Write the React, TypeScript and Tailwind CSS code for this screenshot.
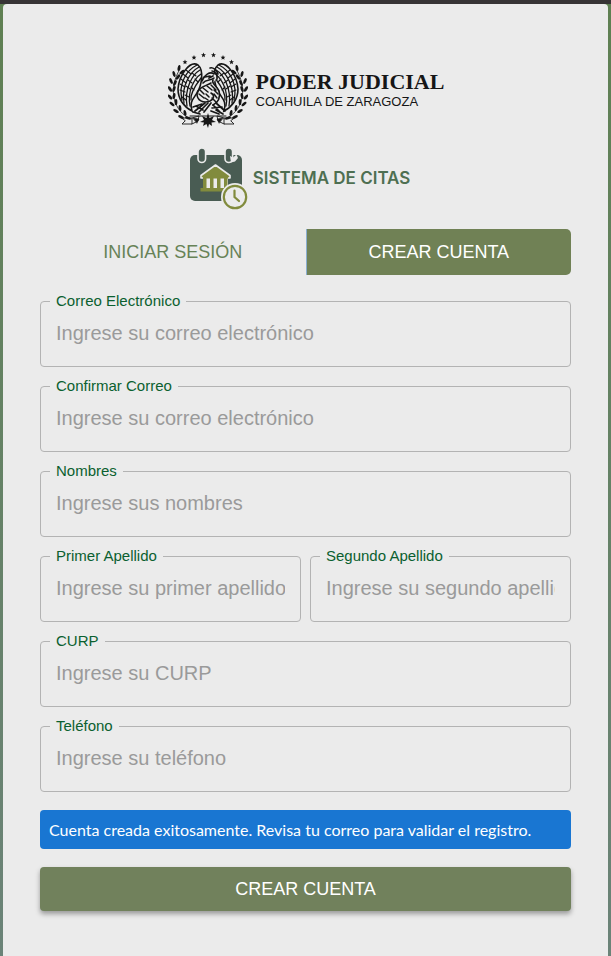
import React, { useState } from "react";

const INK = "#161616";

/* One laurel branch, drawn on the left side; mirrored for the right. */
const LEAVES: [number, number, number][] = [
  [20, 66, -70], [17, 61, -10], [13, 65, -65], [12, 56, -5], [8, 59, -60], [8, 50, 0],
  [4, 52, -50], [6, 44, 10], [2, 45, -40], [6, 37, 20], [2, 37, -30], [7, 31, 25],
  [3, 29, -25], [10, 25, 35], [6, 22, -15], [14, 20, 50], [11, 16, 10],
];

function Half() {
  return (
    <g fill="none" stroke={INK} strokeLinecap="round">
      <path d="M23 67C6 60 -1 38 12 17" strokeWidth="0.8" />
      {LEAVES.map(([x, y, r]) => (
        <ellipse key={`${x}-${y}`} cx={x} cy={y} rx="1.4" ry="3.1" fill={INK} stroke="none" transform={`rotate(${r} ${x} ${y})`} />
      ))}
      <path d="M30 13C22 8 11 23 10 37C10 47 16 55 24 59C21 51 25 47 29 41C34 33 36 18 30 13Z" strokeWidth="1.6" />
      <path d="M29 13C19 18 10 31 14 48M31 15C22 20 13 34 16 51M32 18C25 22 16 36 19 54M33 22C27 26 19 38 22 54M33 26C30 30 22 40 23 48" strokeWidth="1.3" />
      <path d="M18 18L23 22M15 22L20 26M13 27L18 31M12 32L17 35M12 38L17 40M20 28L24 31M18 34L22 37M24 21L28 24M17 43L21 45M14 45L18 48M27 27L30 30M23 35L26 38" strokeWidth="1.1" />
    </g>
  );
}

function Star({ x, y }: { x: number; y: number }) {
  return <path transform={`translate(${x} ${y})`} fill={INK} d="M0-2.4L.7-.8 2.4-.7 1.1.5 1.5 2.2 0 1.2-1.5 2.2-1.1.5-2.4-.7-.7-.8Z" />;
}

function Emblem() {
  return (
    <svg viewBox="0 0 80 76" className="h-[76px] w-20 shrink-0" aria-hidden="true">
      <Star x={17} y={10} /><Star x={26} y={5.5} /><Star x={35.5} y={3} />
      <Star x={45.5} y={3} /><Star x={55} y={5.5} /><Star x={63.5} y={10} />
      <Half />
      <g transform="translate(80 0) scale(-1 1)"><Half /></g>
      <path d="M37 24C41 19 48 20 49 26C46 29 44 31 49 36C54 42 51 51 44 54L53 59 57 63H50L42 58 34 62H25L31 56 27 54 33 51C26 46 28 38 36 36C42 34 43 31 37 29L34 32Z" fill="#ebebeb" />
      <g fill="none" stroke={INK} strokeLinecap="round" strokeLinejoin="round">
        <path d="M42 16C45 15 49 18 50 22M44 19C47 19 50 23 49 27M34 29C36 23 42 19 46 22M35 31C38 27 43 29 46 26" strokeWidth="1.6" />
        <path d="M37 25L42 24M41 26L45 24M45 28C43 31 48 33 51 39C53 45 50 51 45 53" strokeWidth="1.7" />
        <path d="M43 31C38 34 30 35 29 42C29 48 35 52 42 49C46 47 47 43 43 41" strokeWidth="1.6" />
        <path d="M32 38L36 42M31 42L36 46M35 36L40 40M39 34L44 38M43 33L48 38M46 38L50 42M46 42L49 46M44 46L48 50M38 42L41 45M37 46L40 48" strokeWidth="1.5" />
        <path d="M37 51L27 59M40 51L31 60M43 51L36 60M34 52L25 55M28 54L35 58M45 53L52 60M48 51L57 59M44 56L54 55M43 59L51 62M25 60L32 62M48 58L55 62" strokeWidth="1.7" />
        <path d="M22 64H58" strokeWidth="1.2" />
        <path d="M14 66H24V72H14L17 69ZM66 66H56V72H66L63 69ZM24 66L31 64 30 69 24 72M56 66L49 64 50 69 56 72" strokeWidth="0.9" />
        <path d="M25 66L31 67 29 71ZM55 66L49 67 51 71Z" fill={INK} strokeWidth="0.6" />
      </g>
      <path d="M40 61L41.5 66 46 64 44 68 48 70 43.5 70.5 44 74 41 72 40 76 38.5 72 35 74 36 70.5 32 70 36 68 34 64 38.5 66Z" fill={INK} />
    </svg>
  );
}

function CalendarLogo() {
  return (
    <svg viewBox="0 0 60 62" className="h-[62px] w-[60px] shrink-0" aria-hidden="true">
      <rect x="1" y="7" width="52" height="46" rx="5" fill="#495c53" />
      <g fill="#495c53" stroke="#ebebeb" strokeWidth="1.6">
        <rect x="9" y="0" width="7.6" height="14.5" rx="3.8" />
        <rect x="36" y="0" width="7.6" height="14.5" rx="3.8" />
      </g>
      <path d="M41 8L44 9.5 47.5 6.5 49 10 46 13.5 42 14.5Z" fill="#ebebeb" />
      <path d="M12 27.5L26.5 17 41 27.5V30H12Z" fill="#818b3d" stroke="#ebebeb" strokeWidth="1.6" strokeLinejoin="round" />
      <path d="M14 29H39V40H14Z" fill="#ebebeb" />
      <path d="M14 28.500H39V30.500H14ZM14 30H17.500V41H14ZM21 30H24.500V41H21ZM28 30H31.500V41H28ZM35 30H38.500V41H35ZM11.500 40H41V43.500H11.500Z" fill="#818b3d" />
      <circle cx="46" cy="49" r="14" fill="#ebebeb" />
      <circle cx="46" cy="49" r="11.2" fill="none" stroke="#818b3d" strokeWidth="2.2" />
      <path d="M45.5 42.5V49L50 53" fill="none" stroke="#818b3d" strokeWidth="2.2" strokeLinecap="round" />
    </svg>
  );
}

type FieldProps = { id: string; label: string; placeholder: string; type?: string };

function Field({ id, label, placeholder, type = "text" }: FieldProps) {
  return (
    <div className="relative min-w-0 flex-1">
      <input
        id={id}
        type={type}
        placeholder={placeholder}
        className="block h-[66px] w-full rounded border border-[#b3b3b3] bg-transparent px-[15px] pb-0.5 text-xl text-[#333] outline-none placeholder:text-[#9a9a9a] focus:border-[#708155]"
      />
      <label htmlFor={id} className="absolute -top-2 left-2.5 bg-[#ebebeb] px-1.5 text-[15px] leading-4 text-[#0a602f]">
        {label}
      </label>
    </div>
  );
}

export default function App() {
  const [tab, setTab] = useState("crear");
  return (
    <div className="min-h-screen border-t-4 border-[#373435] bg-linear-to-b from-[#5f8052] to-[#6b8378] px-[3px] font-['Liberation_Sans',Arial,sans-serif]">
      <main className="rounded-t-sm bg-[#ebebeb] px-[37px] pt-12 pb-[45px]">
        <header className="flex flex-col items-center">
          <div className="flex items-center gap-2 pl-px">
            <Emblem />
            <div className="text-[#161616]">
              <p className="font-['Liberation_Serif',serif] text-[22px] leading-6 font-bold">PODER JUDICIAL</p>
              <p className="text-[13px] leading-4">COAHUILA DE ZARAGOZA</p>
            </div>
          </div>
          <div className="mt-5 flex items-center gap-1 pr-3">
            <CalendarLogo />
            <h1 className="font-[Inter,sans-serif] text-[17px] font-semibold text-[#4e6f51]">SISTEMA DE CITAS</h1>
          </div>
        </header>

        <div role="tablist" className="mt-[19px] grid h-[46px] grid-cols-2 text-lg">
          <button type="button" role="tab" aria-selected={tab === "iniciar"} onClick={() => setTab("iniciar")} className="text-[#678257]">
            INICIAR SESIÓN
          </button>
          <button type="button" role="tab" aria-selected={tab === "crear"} onClick={() => setTab("crear")} className="rounded-r-[5px] border-l border-[#8aaed0] bg-[#708155] text-white">
            CREAR CUENTA
          </button>
        </div>

        <form className="mt-[26px] flex flex-col gap-[18px]" onSubmit={(e) => e.preventDefault()}>
          <div className="flex flex-col gap-[19px]">
            <Field id="correo" type="email" label="Correo Electrónico" placeholder="Ingrese su correo electrónico" />
            <Field id="confirmar" type="email" label="Confirmar Correo" placeholder="Ingrese su correo electrónico" />
            <Field id="nombres" label="Nombres" placeholder="Ingrese sus nombres" />
            <div className="flex gap-[9px]">
              <Field id="primer" label="Primer Apellido" placeholder="Ingrese su primer apellido" />
              <Field id="segundo" label="Segundo Apellido" placeholder="Ingrese su segundo apellido" />
            </div>
            <Field id="curp" label="CURP" placeholder="Ingrese su CURP" />
            <Field id="telefono" type="tel" label="Teléfono" placeholder="Ingrese su teléfono" />
          </div>
          <p role="status" className="rounded bg-[#1976d2] px-[9px] pt-2 pb-[7px] font-[Lato,sans-serif] text-base leading-6 text-white">
            Cuenta creada exitosamente. Revisa tu correo para validar el registro.
          </p>
          <button type="submit" className="h-11 rounded bg-[#71815c] text-lg text-white shadow-[0_3px_5px_rgba(0,0,0,0.35)]">
            CREAR CUENTA
          </button>
        </form>
      </main>
    </div>
  );
}
